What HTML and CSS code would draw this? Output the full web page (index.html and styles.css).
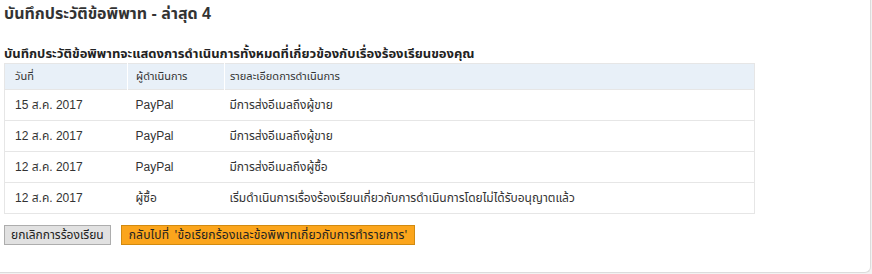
FILE: index.html
```html
<!DOCTYPE html>
<html lang="th">
<head>
<meta charset="utf-8">
<link rel="stylesheet" href="styles.css">
</head>
<body>
<div class="panel">
  <h2 class="title">บันทึกประวัติข้อพิพาท - ล่าสุด 4</h2>
  <h3 class="subtitle">บันทึกประวัติข้อพิพาทจะแสดงการดำเนินการทั้งหมดที่เกี่ยวข้องกับเรื่องร้องเรียนของคุณ</h3>
  <table class="history">
    <thead>
      <tr><th class="c-date">วันที่</th><th class="c-actor">ผู้ดำเนินการ</th><th class="c-detail">รายละเอียดการดำเนินการ</th></tr>
    </thead>
    <tbody>
      <tr><td>15 ส.ค. 2017</td><td>PayPal</td><td>มีการส่งอีเมลถึงผู้ขาย</td></tr>
      <tr><td>12 ส.ค. 2017</td><td>PayPal</td><td>มีการส่งอีเมลถึงผู้ขาย</td></tr>
      <tr><td>12 ส.ค. 2017</td><td>PayPal</td><td>มีการส่งอีเมลถึงผู้ซื้อ</td></tr>
      <tr><td>12 ส.ค. 2017</td><td>ผู้ซื้อ</td><td>เริ่มดำเนินการเรื่องร้องเรียนเกี่ยวกับการดำเนินการโดยไม่ได้รับอนุญาตแล้ว</td></tr>
    </tbody>
  </table>
  <div class="actions">
    <button class="btn btn-grey">ยกเลิกการร้องเรียน</button>
    <button class="btn btn-orange">กลับไปที่ 'ข้อเรียกร้องและข้อพิพาทเกี่ยวกับการทำรายการ'</button>
  </div>
</div>
</body>
</html>
```
FILE: styles.css
```css
html, body {
  margin: 0;
  padding: 0;
  background: #f2f2f2;
}
body {
  width: 872px;
  height: 274px;
  overflow: hidden;
  font-family: "Liberation Sans", Arial, "Noto Sans Thai", Tahoma, sans-serif;
  color: #333;
}
.panel {
  box-sizing: border-box;
  width: 871px;
  height: 273px;
  background: #fff;
  border-right: 1px solid #dcdcdc;
  border-bottom: 1px solid #dcdcdc;
  border-bottom-right-radius: 6px;
  padding: 0 0 0 4px;
}
.title {
  margin: 0;
  padding-top: 4px;
  font-size: 16px;
  line-height: 19px;
  font-weight: bold;
  color: #333;
}
.subtitle {
  margin: 0;
  padding-top: 23px;
  font-size: 13px;
  line-height: 16px;
  font-weight: bold;
  color: #222;
}
.history {
  margin-top: 1px;
  width: 751px;
  border-collapse: collapse;
  border: 1px solid #e6e6e6;
  font-size: 12px;
  table-layout: fixed;
}
.history th {
  background: #e8f0f8;
  font-weight: normal;
  font-size: 11px;
  text-align: left;
  height: 25px;
  border-left: 1px solid #fff;
  color: #333;
}
.history th:first-child { border-left: none; }
.history th, .history td {
  padding: 0 4px 0 8px;
}
.history th:first-child, .history td:first-child { padding-left: 10px; }
.history th:last-child, .history td:last-child { padding-left: 5px; }
.history .c-date { width: 108px; }
.history .c-actor { width: 84px; }
.history td {
  height: 30px;
  border-top: 1px solid #e6e6e6;
  color: #333;
}
.actions {
  display: flex;
  gap: 10px;
  margin-top: 11px;
}
.btn {
  font-family: Tahoma, "Noto Sans Thai", "Liberation Sans", sans-serif;
  font-size: 12px;
  height: 20px;
  padding: 0 6px;
  margin: 0;
  color: #222;
  cursor: pointer;
}
.btn-grey {
  background: #e1e1e1;
  border: 1px solid #adadad;
}
.btn-orange {
  background: #fba51c;
  border: 1px solid #d18a10;
  padding: 0 7px;
  letter-spacing: 0.2px;
  word-spacing: 2px;
}
```
